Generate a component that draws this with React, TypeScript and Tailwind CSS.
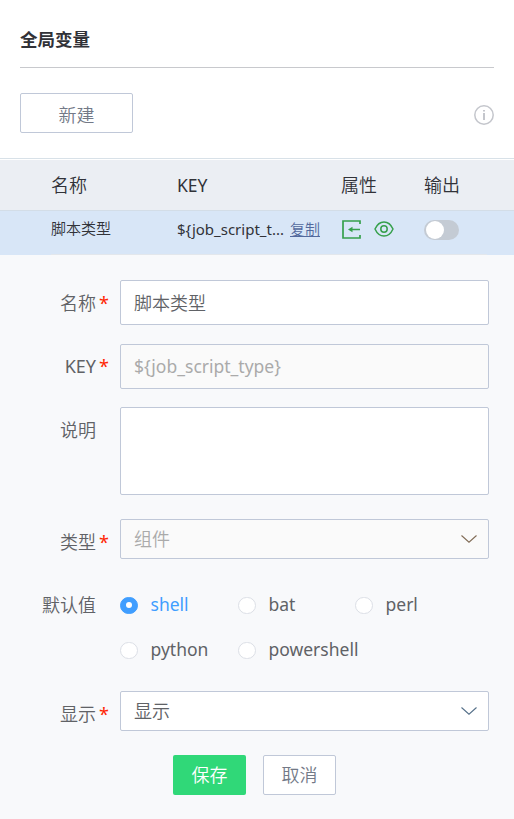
import type { ReactNode } from "react";

const controlBorder = "rounded-[2px] border border-[#c0c8d8]";

function Latin({ children, className = "" }: { children: ReactNode; className?: string }) {
  return <span className={`font-normal ${className}`}>{children}</span>;
}

function Field({
  label,
  required,
  className = "",
  labelClass = "",
  children,
}: {
  label: ReactNode;
  required?: boolean;
  className?: string;
  labelClass?: string;
  children: ReactNode;
}) {
  return (
    <div className={`flex items-start ${className}`}>
      <div className={`flex w-[120px] shrink-0 leading-[26px] ${labelClass}`}>
        <span className="w-24 text-right">{label}</span>
        {required && <span className="ml-[3px] font-normal text-[#ff2602]">*</span>}
      </div>
      {children}
    </div>
  );
}

function Select({ value, disabled }: { value: string; disabled?: boolean }) {
  return (
    <div
      className={`flex h-10 w-[369px] items-center justify-between pr-[11px] pl-[13px] ${controlBorder} ${
        disabled ? "bg-[#fafafa] text-[#aaaaaa]" : "bg-white"
      }`}
    >
      <span>{value}</span>
      <svg width="16" height="10" viewBox="0 0 16 10" fill="none" stroke={disabled ? "#806b55" : "#557089"} strokeWidth="1.1">
        <path d="M.5 1.5 8 8.2l7.5-6.7" />
      </svg>
    </div>
  );
}

function Radio({ label, checked }: { label: string; checked?: boolean }) {
  return (
    <label className="flex h-[45px] items-center">
      <span
        className={`mb-px flex h-[17px] w-[18px] shrink-0 items-center justify-center rounded-full border ${
          checked ? "border-[#409eff] bg-[#409eff]" : "border-[#dcdfe6] bg-white"
        }`}
      >
        {checked && <span className="size-[6px] rounded-full bg-white" />}
      </span>
      <span className={`ml-[12.5px] pb-0.5 font-normal ${checked ? "text-[#409eff]" : ""}`}>{label}</span>
    </label>
  );
}

export default function App() {
  return (
    <div className="h-[819px] w-[514px] overflow-hidden bg-white font-['Noto_Sans','Noto_Sans_CJK_SC',sans-serif] text-[18px] font-[350] text-[#606266]">
      <header className="mx-5 h-[68px] border-b border-[#c8c9cd] pt-[26px] text-[17.5px] leading-[26px] font-bold text-[#313238]">
        全局变量
      </header>
      <div className="flex h-[90px] items-center justify-between px-5">
        <button className={`h-10 w-[113px] bg-white pt-[5px] text-[#737987] ${controlBorder}`}>新建</button>
        <svg className="mt-1" width="20" height="20" viewBox="0 0 20 20" fill="none" stroke="#c4c6cc" strokeWidth="1.5">
          <circle cx="10" cy="10" r="9.2" />
          <path d="M10 8v7M10 5v1.6" strokeWidth="2" />
        </svg>
      </div>

      <section>
        <div className="h-0.5 border-t border-[#d8e1e8]" />
        <div className="flex h-[51px] items-center border-b border-[#d3dde7] bg-[#ebeef3] pl-[51px] text-[#313238]">
          <span className="w-[126px]">名称</span>
          <Latin className="w-[164px] text-[17.5px]">KEY</Latin>
          <span className="w-[83px]">属性</span>
          <span>输出</span>
        </div>
        <div className="flex h-11 items-center bg-[#d8e6f7] pl-[51px] text-[15px] text-[#313238]">
          <span className="w-[126px] pb-2.5">脚本类型</span>
          <Latin className="w-[113px] pb-2">{"${job_script_t..."}</Latin>
          <a className="w-[51px] pb-2 text-[#52699d] underline">复制</a>
          <span className="flex w-[83px] items-center gap-[13px] pb-2 pl-px">
            <svg width="19" height="19" viewBox="0 0 19 19" fill="none" stroke="#36a04c" strokeWidth="1.7">
              <path d="M18 4V1H1v17h17v-3M18 9.5H8" />
              <path d="m6 9.5 4.5-2.700v5.400Z" fill="#36a04c" stroke="none" />
            </svg>
            <svg width="20" height="16" viewBox="0 0 20 16" fill="none" stroke="#36a04c" strokeWidth="1.5">
              <path d="M1 8c2-4.400 5.200-7 9-7s7 2.600 9 7c-2 4.400-5.200 7-9 7S3 12.400 1 8Z" />
              <circle cx="10" cy="8" r="3.200" />
            </svg>
          </span>
          <span className="mb-1.5 flex h-5 w-[35px] items-center rounded-full bg-[#c4cbd4] pl-0.5">
            <span className="size-[18px] rounded-full bg-white" />
          </span>
        </div>
        <div className="-mt-px ml-[51px] h-px w-[436px] bg-[#e3e7ec]" />
      </section>

      <form className="h-[564px] bg-[#f8f9fb] pt-[25px]">
        <Field label="名称" required className="h-16" labelClass="pt-[10px]">
          <div className={`flex h-[45px] w-[369px] items-center bg-white pt-0.5 pl-[13px] ${controlBorder}`}>脚本类型</div>
        </Field>
        <Field label={<Latin>KEY</Latin>} required className="h-[63px]" labelClass="pt-[9px]">
          <div className={`flex h-[45px] w-[369px] items-center bg-[#fafafa] pl-[13px] text-[#aaaaaa] ${controlBorder}`}>
            <Latin className="text-[17.5px]">{"${job_script_type}"}</Latin>
          </div>
        </Field>
        <Field label="说明" className="h-28" labelClass="pt-[10px]">
          <div className={`h-[88px] w-[369px] bg-white ${controlBorder}`} />
        </Field>
        <Field label="类型" required className="h-16" labelClass="pt-[10px]">
          <Select value="组件" disabled />
        </Field>
        <Field label="默认值" className="h-[108px]" labelClass="pt-[9px]">
          <div className="grid grid-cols-[118px_117px_134px] text-[17.5px]">
            <Radio label="shell" checked />
            <Radio label="bat" />
            <Radio label="perl" />
            <Radio label="python" />
            <Radio label="powershell" />
          </div>
        </Field>
        <Field label="显示" required className="h-16" labelClass="pt-[10px]">
          <Select value="显示" />
        </Field>
        <div className="flex gap-[17px] pl-[173px]">
          <button type="button" className="h-10 w-[73px] rounded-[2px] bg-[#30d878] text-white">
            保存
          </button>
          <button type="button" className={`h-10 w-[73px] bg-white text-[#737987] ${controlBorder}`}>
            取消
          </button>
        </div>
      </form>
    </div>
  );
}
